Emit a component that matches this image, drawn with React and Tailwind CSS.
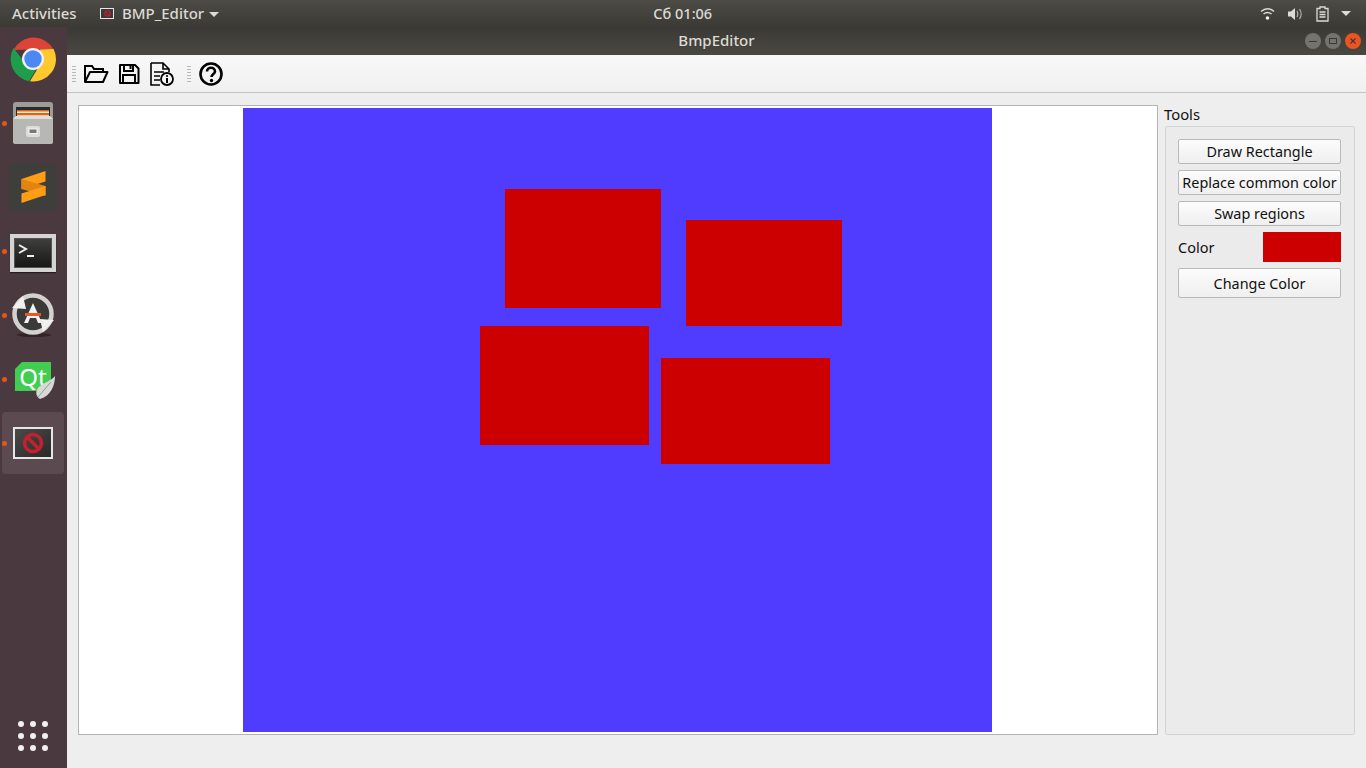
import React from 'react'

const uiFont = { fontFamily: '"Noto Sans", "Open Sans", sans-serif' }

function ChromeIcon() {
  return (
    <svg width="46" height="46" viewBox="0 0 46 46">
      <path d="M3.500 14A22.500 22.500 0 0 1 43.500 13.500L23 13.500Z" fill="#db4437" />
      <path d="M3.500 12A22.500 22.500 0 0 0 19 45.200L28 30L23 31L15 27Z" fill="#1f9d4d" />
      <path d="M43.600 13A22.500 22.500 0 0 1 20 45.300L31 27L30 13.500Z" fill="#fdc92f" />
      <circle cx="23" cy="23" r="11" fill="#f1f1f1" />
      <circle cx="23" cy="23" r="8.700" fill="#4a89f3" />
    </svg>
  )
}

function FilesIcon() {
  return (
    <svg width="44" height="44" viewBox="0 0 44 44">
      <path d="M2 4Q2 1 5 1H39Q42 1 42 4V42H2Z" fill="#9c9c99" />
      <rect x="5" y="6" width="34" height="12" fill="#2b2b29" />
      <rect x="6" y="9" width="32" height="9" fill="#d9641c" />
      <rect x="6" y="10.500" width="32" height="1.500" fill="#f7e6cf" />
      <rect x="6" y="14" width="32" height="1.200" fill="#f7c58a" />
      <path d="M2 18L5 15H39L42 18V41Q42 43 40 43H4Q2 43 2 41Z" fill="#b7b7b4" />
      <path d="M2 18L5 15H39L42 18Z" fill="#dededc" />
      <rect x="15" y="25" width="14" height="11" rx="2" fill="#dcdcda" />
      <rect x="18" y="28" width="8" height="4.500" fill="#777775" stroke="#f4f4f4" />
    </svg>
  )
}

function SublimeIcon() {
  return (
    <div className="flex h-12 w-12 items-center justify-center rounded-[5px] bg-[#3e3e3c]">
      <svg width="25" height="32" viewBox="0 0 25 32">
        <path d="M24.500 0V10.500L0.500 18V8Z" fill="#ff9d14" />
        <path d="M0.500 8V18L24.500 25V15Z" fill="#e28510" />
        <path d="M24.500 15V24L0.500 32V22.500Z" fill="#ff9d14" />
      </svg>
    </div>
  )
}

function TerminalIcon() {
  return (
    <div className="mt-[4px] flex h-[38px] w-[46px] items-center justify-center bg-[#d4d4d2] shadow-[0_1px_1px_rgba(0,0,0,0.5)]">
      <div className="h-[30px] w-[38px] border border-[#555] bg-gradient-to-b from-[#3f3f3d] to-[#181817]">
        <svg width="36" height="28" viewBox="0 0 36 28">
          <path d="M4 6L11 10L4 14" fill="none" stroke="#eee" strokeWidth="2" />
          <path d="M12 17H19" stroke="#eee" strokeWidth="2" />
        </svg>
      </div>
    </div>
  )
}

function UpdaterIcon() {
  return (
    <svg width="46" height="46" viewBox="0 0 46 46">
      <ellipse cx="24" cy="43" rx="17" ry="2" fill="#2f2528" />
      <circle cx="23" cy="22" r="18.500" fill="#3a3a38" stroke="#d2d2d0" strokeWidth="4.500" />
      <path d="M23 11L14 31H18L20 26H26L28 31H32Z" fill="#f2f2f2" />
      <rect x="15" y="21" width="16" height="3" fill="#e8562a" />
      <path d="M2 16L13 4L16 17Z" fill="#f0f0f0" />
      <path d="M44 28L33 40L30 27Z" fill="#f0f0f0" />
    </svg>
  )
}

function QtIcon() {
  return (
    <div className="relative ml-[4px] mt-[6px] h-[40px] w-[40px]">
      <div className="flex h-[29px] w-[36px] items-center justify-center bg-[#41cd52] text-[24px] leading-none text-white [clip-path:polygon(7px_0,100%_0,100%_100%,0_100%,0_7px)]">
        Qt
      </div>
      <svg className="absolute left-[20px] top-[13px]" width="21" height="25" viewBox="0 0 21 25">
        <path d="M20 1C20 10 16 21 5 24C0 21 0 15 5 11C10 7 16 6 20 1Z" fill="#d8d8d6" />
        <path d="M16 7L3 22" stroke="#999" />
      </svg>
    </div>
  )
}

function BmpAppIcon({ size = 40 }) {
  const small = size < 20
  return (
    <div
      className={small
        ? 'flex h-[11px] w-[14px] items-center justify-center border border-[#e6e6e6] bg-[#3a3a38]'
        : 'flex h-[32px] w-[40px] items-center justify-center border-2 border-[#e6e6e6] bg-gradient-to-br from-[#4a4a48] to-[#2a2a29]'}
    >
      <svg width={small ? 7 : 22} height={small ? 7 : 22} viewBox="0 0 22 22">
        <circle cx="11" cy="11" r="8.500" fill="none" stroke="#c5202f" strokeWidth="3.500" />
        <path d="M5 5L17 17" stroke="#c5202f" strokeWidth="3.500" />
      </svg>
    </div>
  )
}

function DockItem({ active, dot, children }) {
  return (
    <div className={`relative flex h-[62px] items-center justify-center ${active ? 'ml-[2px] mr-[3px] rounded-[4px] bg-[#5b4a4f]' : 'pr-[1px]'}`}>
      {dot && <span className={`absolute top-[29px] h-[5px] w-[5px] rounded-full bg-[#e95420] ${active ? 'left-0' : 'left-[2px]'}`} />}
      {children}
    </div>
  )
}

function Dock() {
  return (
    <aside className="flex w-[67px] flex-col bg-[#4a3a3f]">
      <div className="flex flex-col gap-[2px] pt-[1px]">
        <DockItem><ChromeIcon /></DockItem>
        <DockItem dot><FilesIcon /></DockItem>
        <DockItem><SublimeIcon /></DockItem>
        <DockItem dot><TerminalIcon /></DockItem>
        <DockItem dot><UpdaterIcon /></DockItem>
        <DockItem dot><QtIcon /></DockItem>
        <DockItem active dot><BmpAppIcon /></DockItem>
      </div>
      <div className="mt-auto mb-[17px] ml-[18px] grid w-[30px] grid-cols-3 gap-[6px]">
        {Array.from({ length: 9 }).map((_, i) => (
          <span key={i} className="h-[6px] w-[6px] rounded-full bg-[#f2f0f0]" />
        ))}
      </div>
    </aside>
  )
}

function TopBar() {
  return (
    <header className="flex h-[27px] items-center bg-gradient-to-b from-[#4d4b45] to-[#3b3a35] text-[15px] text-[#dcdad5]">
      <span className="ml-[12px] w-[88px] font-medium">Activities</span>
      <BmpAppIcon size={14} />
      <span className="ml-[8px] font-medium">BMP_Editor</span>
      <span className="ml-[5px] mt-[1px] h-0 w-0 border-x-[5px] border-t-[5px] border-x-transparent border-t-[#dcdad5]" />
      <span className="ml-[434px] text-[14.500px] font-medium">Сб 01:06</span>
      <div className="ml-auto mr-[15px] flex items-center gap-[13px]">
        <svg width="15" height="13" viewBox="0 0 15 13" fill="none" stroke="#dcdad5">
          <path d="M1 4.500C5 1 10 1 14 4.500" strokeWidth="1.500" />
          <path d="M3.500 7C6 5 9 5 11.500 7" strokeWidth="1.500" />
          <circle cx="7.500" cy="11" r="1.800" fill="#f2f2f2" stroke="none" />
        </svg>
        <svg width="15" height="14" viewBox="0 0 15 14" fill="none">
          <path d="M0 4.500H3L7 1V13L3 9.500H0Z" fill="#dcdad5" />
          <path d="M9 4C10 6 10 8 9 10M11.500 2C13.500 5 13.500 9 11.500 12" stroke="#a9a7a2" strokeWidth="1.300" />
        </svg>
        <svg width="13" height="16" viewBox="0 0 13 16" fill="none" stroke="#dcdad5">
          <path d="M4 1H9V2.500H12V15H1V2.500H4Z" strokeWidth="1.300" />
          <path d="M3.500 6H9.500M3.500 8.500H9.500M3.500 11H9.500" strokeWidth="1.500" />
        </svg>
        <span className="ml-[-1px] h-0 w-0 border-x-[5px] border-t-[5px] border-x-transparent border-t-[#dcdad5]" />
      </div>
    </header>
  )
}

function TitleBar() {
  return (
    <div className="flex h-[28px] items-center bg-gradient-to-b from-[#3a3935] to-[#494843] text-[15px] font-medium text-[#dfdbd2]">
      <span className="flex-1 pb-[2px] pl-[61px] text-center">BmpEditor</span>
      <div className="mr-[5px] flex gap-[4px]">
        <span className="flex h-4 w-4 items-center justify-center rounded-full bg-[#74736e]">
          <span className="h-[1px] w-[8px] bg-[#3a3935]" />
        </span>
        <span className="flex h-4 w-4 items-center justify-center rounded-full bg-[#74736e]">
          <span className="h-[6px] w-[8px] border border-[#3a3935]" />
        </span>
        <span className="flex h-4 w-4 items-center justify-center rounded-full bg-[#e95420]">
          <svg width="8" height="8" viewBox="0 0 8 8">
            <path d="M1.500 1.500L6.500 6.500M6.500 1.500L1.500 6.500" stroke="#3a3935" strokeWidth="1.100" />
          </svg>
        </span>
      </div>
    </div>
  )
}

function Grip({ className = '' }) {
  return <span className={`block h-[18px] w-[4px] bg-[radial-gradient(#b9b9b9_0.6px,transparent_0.8px)] bg-[length:2px_3px] ${className}`} />
}

function Toolbar() {
  return (
    <div className="flex h-[38px] items-center border-b border-[#c4c4c4] bg-gradient-to-b from-[#f8f8f8] to-[#f0f0f0] pl-[5px] pt-[1px]">
      <Grip />
      <svg className="ml-[7px]" width="26" height="22" viewBox="0 0 26 22" fill="none" stroke="#000" strokeWidth="2">
        <path d="M2 19V3H9L11 6H20V9" />
        <path d="M2 19L7 9H24.500L20 19Z" strokeLinejoin="round" />
      </svg>
      <svg className="ml-[9px]" width="22" height="22" viewBox="0 0 22 22" fill="none" stroke="#000" strokeWidth="2">
        <path d="M2 2H17L20.500 5.500V20H2Z" strokeLinejoin="round" />
        <path d="M6 2V8H15V2" />
        <path d="M5 20V12H17V20" />
        <rect x="11.500" y="3" width="2" height="3" fill="#000" stroke="none" />
      </svg>
      <svg className="ml-[9px]" width="26" height="26" viewBox="0 0 26 26" fill="none" stroke="#000" strokeWidth="1.600">
        <path d="M2 2H14L20 8V11M14 2V8H20M11 24H2V2" />
        <path d="M5 11H15M5 15H11M5 19H11" strokeWidth="1.400" />
        <circle cx="18" cy="18" r="6" fill="#f4f4f4" strokeWidth="1.800" />
        <circle cx="18" cy="15" r="1.100" fill="#000" stroke="none" />
        <path d="M18 17V22" strokeWidth="2" />
      </svg>
      <Grip className="ml-[12px]" />
      <svg className="ml-[8px]" width="24" height="24" viewBox="0 0 24 24" fill="none">
        <circle cx="12" cy="12" r="10.500" stroke="#000" strokeWidth="2.600" />
        <path d="M8 9.500C8 4.500 16 4.500 16 9.500C16 12 12.500 12 12.500 15" stroke="#000" strokeWidth="2.600" />
        <circle cx="12.500" cy="18.500" r="1.700" fill="#000" />
      </svg>
    </div>
  )
}

const rects = [
  'left-[262px] top-[81px] h-[119px] w-[156px]',
  'left-[443px] top-[112px] h-[106px] w-[156px]',
  'left-[237px] top-[218px] h-[119px] w-[169px]',
  'left-[418px] top-[250px] h-[106px] w-[169px]',
]

function Canvas() {
  return (
    <div className="flex h-[630px] w-[1080px] items-center justify-center border border-[#b4b4b4] bg-white pr-[1px]">
      <div className="relative h-[624px] w-[749px] bg-[#4f3cff]">
        {rects.map((r) => (
          <div key={r} className={`absolute bg-[#cc0000] ${r}`} />
        ))}
      </div>
    </div>
  )
}

function ToolButton({ label, tall }) {
  return (
    <button className={`w-full rounded-[2px] border border-[#b9b9b9] bg-gradient-to-b from-[#fcfcfc] to-[#efefef] pt-[2px] text-center text-[14.400px] leading-none whitespace-nowrap text-[#111] ${tall ? 'h-[30px]' : 'h-[25px]'}`}>
      {label}
    </button>
  )
}

function ToolsPanel() {
  return (
    <div className="ml-[6px] flex h-[630px] w-[192px] flex-col">
      <div className="h-[21px] text-[14.800px] leading-[19px] text-[#111]">Tools</div>
      <div className="ml-[1px] flex w-[190px] flex-1 flex-col rounded-[2px] border border-[#d4d4d4] bg-[#ebebeb] pl-[12px] pr-[13px] pt-[12px]">
        <div className="flex flex-col gap-[6px]">
          <ToolButton label="Draw Rectangle" />
          <ToolButton label="Replace common color" />
          <ToolButton label="Swap regions" />
        </div>
        <div className="mt-[6px] flex h-[30px] items-center justify-between text-[14.500px] text-[#111]">
          <span className="pt-[2px]">Color</span>
          <span className="h-[30px] w-[78px] bg-[#cc0000]" />
        </div>
        <div className="mt-[6px]">
          <ToolButton label="Change Color" tall />
        </div>
      </div>
    </div>
  )
}

export default function App() {
  return (
    <div className="flex h-[768px] w-[1366px] flex-col overflow-hidden bg-[#eeeeee]" style={uiFont}>
      <TopBar />
      <div className="flex flex-1">
        <Dock />
        <main className="flex flex-1 flex-col">
          <TitleBar />
          <Toolbar />
          <div className="flex pl-[11px] pt-[12px]">
            <Canvas />
            <ToolsPanel />
          </div>
        </main>
      </div>
    </div>
  )
}
